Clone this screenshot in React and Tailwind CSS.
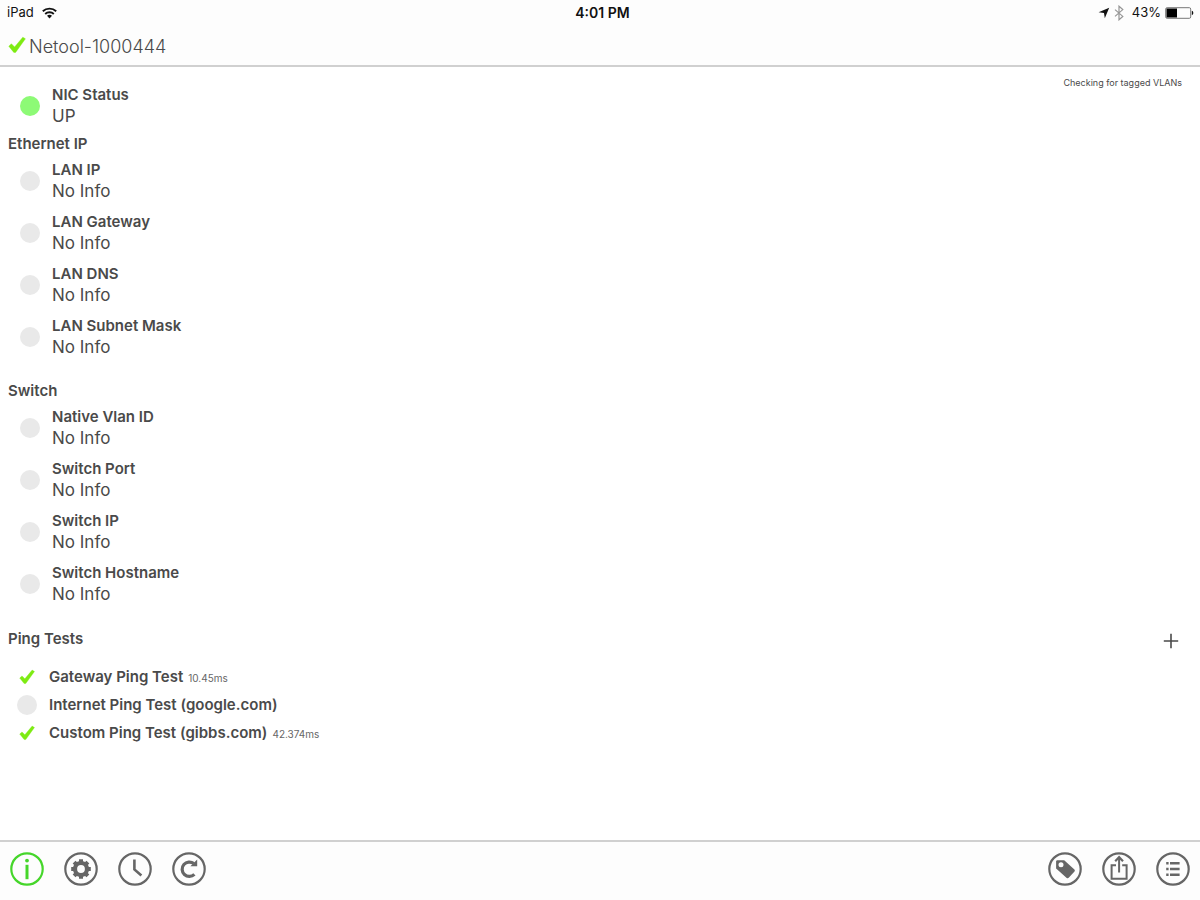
const ethernet = ["LAN IP", "LAN Gateway", "LAN DNS", "LAN Subnet Mask"];
const switchInfo = ["Native Vlan ID", "Switch Port", "Switch IP", "Switch Hostname"];
const pings = [
  { name: "Gateway Ping Test", time: "10.45ms", ok: true },
  { name: "Internet Ping Test (google.com)", ok: false },
  { name: "Custom Ping Test (gibbs.com)", time: "42.374ms", ok: true },
];

function Check({ className }) {
  return (
    <svg viewBox="0 0 18 18" className={className} aria-hidden="true">
      <path d="M0.8 10.2 3.4 7.8 6.6 11 14.8 1.2 17.4 2.8 7.6 16.4H5.8Z" fill="#7deb12" stroke="#7deb12" strokeWidth="0.4" strokeLinejoin="round" />
    </svg>
  );
}

function Row({ label, value = "No Info", up }) {
  return (
    <div className="flex items-center gap-3 pt-1 pb-[5px] pl-5">
      <span className={up ? "size-5 rounded-full bg-[#8dfa76]" : "size-5 rounded-full bg-[#e9e9e9]"} />
      <dl>
        <dt className="text-[15px] leading-[22px] font-semibold">{label}</dt>
        <dd className="text-[17px] leading-[21px]">{value}</dd>
      </dl>
    </div>
  );
}

function Section({ title, items }) {
  return (
    <section>
      <h2 className="px-2 text-[15px] leading-[23px] font-semibold">{title}</h2>
      {items.map((item) => (
        <Row key={item} label={item} />
      ))}
    </section>
  );
}

function IconButton({ label, active, children }) {
  return (
    <button type="button" aria-label={label} className={active ? "text-[#45d62a]" : "text-[#666666]"}>
      <svg viewBox="0 0 34 34" className="size-[34px]" fill="none" stroke="currentColor" strokeWidth="2.2" aria-hidden="true">
        <circle cx="17" cy="17" r="15.7" />
        {children}
      </svg>
    </button>
  );
}

export default function App() {
  return (
    <div className="flex min-h-screen flex-col bg-white font-['Inter','Liberation_Sans',sans-serif] text-[#4a4a4a]">
      <header className="border-b-2 border-[#d0d0d0] bg-[#fdfdfd]">
        <div className="grid h-[25px] grid-cols-3 items-center pr-1.5 pl-[7px] text-[13px] text-[#111111]">
          <div className="flex items-center gap-2">
            <span>iPad</span>
            <svg viewBox="0 0 15 12" className="h-3 w-[15px]" aria-label="Wi-Fi" fill="none" stroke="#111111" strokeWidth="1.9">
              <path d="M0.8 4.3C4.6 0.7 10.4 0.7 14.2 4.3" />
              <path d="M3.2 7C5.6 4.7 9.4 4.7 11.8 7" />
              <path d="M5 8.8C6.4 7.5 8.6 7.5 10 8.8L7.5 11.4Z" fill="#111111" stroke="none" />
            </svg>
          </div>
          <span className="pl-1 text-center text-sm font-semibold">4:01 PM</span>
          <div className="flex items-center justify-end">
            <svg viewBox="0 0 12 12" className="mr-1 size-3" aria-label="Location">
              <path d="M11.2 0.8 6.8 11.2 6 6 0.6 5.2Z" fill="#111111" />
            </svg>
            <svg viewBox="0 0 10 16" className="mr-2 h-4 w-2.5" aria-label="Bluetooth" fill="none" stroke="#969696" strokeWidth="1.2">
              <path d="M1 4.6 8.8 11.4 5 14.8V1.2L8.8 4.6 1 11.4" />
            </svg>
            <span className="mr-1">43%</span>
            <svg viewBox="0 0 29 12" className="h-3 w-[29px]" aria-label="Battery">
              <rect x="0.7" y="0.7" width="25" height="10.6" rx="1.4" fill="none" stroke="#777777" />
              <path d="M1.5 1.5H12V10.5H1.5Z" fill="#000000" />
              <path d="M26.8 3.8C28.8 4.4 28.8 7.6 26.8 8.2Z" fill="#111111" />
            </svg>
          </div>
        </div>
        <div className="flex h-10 items-center gap-[3px] pl-2">
          <Check className="size-[18px]" />
          <h1 className="pt-1 text-lg leading-6 font-light">Netool-1000444</h1>
        </div>
      </header>

      <main className="flex-1 pt-[9px]">
        <div className="flex items-start justify-between pr-[18px]">
          <div className="pt-1">
            <Row label="NIC Status" value="UP" up />
          </div>
          <p className="text-[9px] leading-[13px]">Checking for tagged VLANs</p>
        </div>
        <div className="flex flex-col gap-4">
          <Section title="Ethernet IP" items={ethernet} />
          <Section title="Switch" items={switchInfo} />
          <section>
            <div className="flex h-[26px] items-center justify-between pr-5 pl-2">
              <h2 className="text-[15px] font-semibold">Ping Tests</h2>
              <button type="button" aria-label="Add ping test" className="pt-1">
                <svg viewBox="0 0 18 18" className="size-[18px]" fill="none" stroke="#4a4a4a" strokeWidth="1.6" aria-hidden="true">
                  <path d="M9 1.8V16.2M1.8 9H16.2" />
                </svg>
              </button>
            </div>
            <ul className="pt-[11px] pl-[17px]">
              {pings.map((ping) => (
                <li key={ping.name} className="flex h-7 items-center gap-3">
                  <span className="flex size-5 items-center justify-center">
                    {ping.ok ? <Check className="size-4" /> : <span className="size-5 rounded-full bg-[#e9e9e9]" />}
                  </span>
                  <span className="flex items-baseline gap-[5px]">
                    <span className="text-[15px] font-semibold">{ping.name}</span>
                    <span className="text-[10px] text-[#666666]">{ping.time}</span>
                  </span>
                </li>
              ))}
            </ul>
          </section>
        </div>
      </main>

      <footer className="flex h-[60px] items-center justify-between border-t-2 border-[#d0d0d0] bg-[#fdfdfd] px-2.5 pb-1">
        <nav className="flex gap-5" aria-label="Views">
          <IconButton label="Information" active>
            <path d="M17 12.8V27.2" strokeWidth="3" />
            <circle cx="17" cy="8.6" r="1.9" fill="currentColor" stroke="none" />
          </IconButton>
          <IconButton label="Settings">
            <circle cx="17" cy="17" r="6" strokeWidth="4.2" />
            <path d="M17 7.2V10M17 24V26.8M7.2 17H10M24 17H26.8M10.1 10.1 12 12M22 22 23.9 23.9M23.9 10.1 22 12M12 22 10.1 23.9" strokeWidth="4" />
          </IconButton>
          <IconButton label="History">
            <path d="M16.4 7.5V17.4L23.4 23.4" strokeWidth="2.6" />
          </IconButton>
          <IconButton label="Refresh">
            <path d="M22.4 22.4A7.2 7.2 0 1 1 21.8 11.6" strokeWidth="3.2" />
            <path d="M25.2 7.6V14.2H18.4Z" fill="currentColor" stroke="none" />
          </IconButton>
        </nav>
        <div className="flex gap-5">
          <IconButton label="Tags">
            <path fillRule="evenodd" d="M9.4 8.2H16.2L26.4 17.4C27 18 27 18.8 26.5 19.4L20.7 25.8C20.1 26.4 19.3 26.4 18.7 25.9L8.1 16.6V9.5C8.1 8.8 8.6 8.2 9.4 8.2ZM13 10.2A2.5 2.5 0 1 0 13 15.2 2.5 2.5 0 1 0 13 10.2Z" fill="currentColor" stroke="none" />
          </IconButton>
          <IconButton label="Share">
            <path d="M14 13.2H9.6V26.8H24.6V13.2H20.2M17.1 20.5V6" strokeWidth="2" />
            <path d="M13.2 9.2 17.1 5.2 21 9.2" strokeWidth="2.2" />
          </IconButton>
          <IconButton label="List">
            <path d="M14 11.2H23.6M14 17H23.6M14 22.8H23.6M10.2 11.2H12.6M10.2 17H12.6M10.2 22.8H12.6" strokeWidth="2.4" />
          </IconButton>
        </div>
      </footer>
    </div>
  );
}
